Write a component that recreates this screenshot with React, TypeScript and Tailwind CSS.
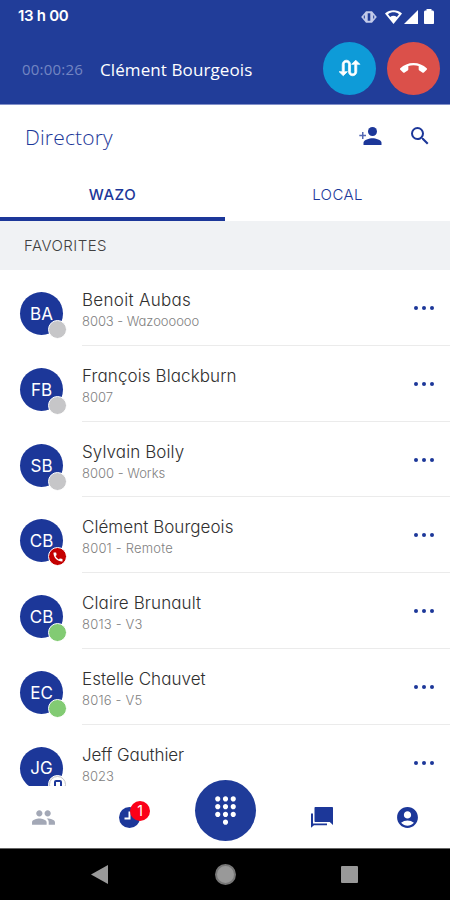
import React from "react";
import {
  MdAccountCircle,
  MdCall,
  MdCallEnd,
  MdDialpad,
  MdPeople,
  MdSearch,
} from "react-icons/md";

type Status = "offline" | "busy" | "available" | "mobile";

interface Contact {
  initials: string;
  name: string;
  detail: string;
  status: Status;
  nameClass: string;
  detailClass: string;
}

const contacts: Contact[] = [
  { initials: "BA", name: "Benoit Aubas", detail: "8003 - Wazoooooo", status: "offline", nameClass: "tracking-[0.3px]", detailClass: "tracking-[-0.05px]" },
  { initials: "FB", name: "François Blackburn", detail: "8007", status: "offline", nameClass: "tracking-[0.1px]", detailClass: "tracking-[0px]" },
  { initials: "SB", name: "Sylvain Boily", detail: "8000 - Works", status: "offline", nameClass: "tracking-[0.1px]", detailClass: "tracking-[0px]" },
  { initials: "CB", name: "Clément Bourgeois", detail: "8001 - Remote", status: "busy", nameClass: "tracking-[0.05px]", detailClass: "tracking-[0.2px]" },
  { initials: "CB", name: "Claire Brunault", detail: "8013 - V3", status: "available", nameClass: "tracking-[0.1px]", detailClass: "tracking-[0.2px]" },
  { initials: "EC", name: "Estelle Chauvet", detail: "8016 - V5", status: "available", nameClass: "tracking-[0.05px]", detailClass: "tracking-[0.2px]" },
  { initials: "JG", name: "Jeff Gauthier", detail: "8023", status: "mobile", nameClass: "tracking-[-0.1px]", detailClass: "tracking-[0px]" },
];

const statusColors: Record<Status, string> = {
  offline: "bg-[#c6c6c8]",
  busy: "bg-[#c40000]",
  available: "bg-[#82cb73]",
  mobile: "bg-white",
};

function StatusBar() {
  return (
    <div className="h-[33px] pl-[18px] pr-[16px] flex items-center justify-between text-white">
      <span className="text-[15px] font-semibold tracking-[-0.3px]">13 h 00</span>
      <div className="flex items-center">
        <svg width="16" height="14" viewBox="0 0 16 14" className="mr-2">
          <path d="M5 1.200h6l4.800 5.800-4.800 5.800H5L.2 7z" fill="#c3cbea" />
          <path d="M6.700 3.200h2.600v7.600H6.700zM2.800 5.500h1v3h-1zM12.200 5.500h1v3h-1z" fill="#213d99" />
        </svg>
        <svg width="17" height="14" viewBox="0 0 17 14" className="mr-[2px]">
          <path d="M8.500 14L0 3.500C4.800-.8 12.200-.8 17 3.500z" fill="#fff" />
          <path d="M3 4.300c3.300-2.600 7.700-2.600 11 0l-2.200 2.600c-2-1.500-4.600-1.500-6.600 0z" fill="#213d99" />
        </svg>
        <svg width="14" height="14" viewBox="0 0 14 14" className="mr-[6px]">
          <path d="M14 0v14H0z" fill="#fff" />
        </svg>
        <svg width="10" height="15" viewBox="0 0 10 15">
          <path d="M2.500 0h5v1.500h.9c1 0 1.600.6 1.600 1.600v11.100c0 .5-.3.800-.8.800H.8c-.5 0-.8-.3-.8-.8V3.100c0-1 .6-1.600 1.600-1.600h.9z" fill="#fff" />
        </svg>
      </div>
    </div>
  );
}

function CallBar() {
  return (
    <div className="h-[72px] pb-px pl-[22px] pr-[10px] flex items-center">
      <span className="w-[78px] pt-[2px] font-['Open_Sans'] text-[15px] tracking-[0.2px] text-[#7385c2]">00:00:26</span>
      <span className="flex-1 pt-[2px] font-['Open_Sans'] text-[17px] tracking-[0.1px] text-white whitespace-nowrap">Clément Bourgeois</span>
      <button className="size-[53px] rounded-full bg-[#0e9bd8] text-white flex items-center justify-center mr-[11px]">
        <svg width="25" height="25" viewBox="0 0 24 24" fill="currentColor" stroke="currentColor" strokeWidth="0.7">
          <path d="M18 4l-4 4h3v7c0 1.100-.9 2-2 2s-2-.9-2-2V8c0-2.210-1.790-4-4-4S5 5.790 5 8v7H2l4 4 4-4H7V8c0-1.100.9-2 2-2s2 .9 2 2v7c0 2.210 1.790 4 4 4s4-1.790 4-4V8h3l-4-4z" />
        </svg>
      </button>
      <button className="size-[53px] rounded-full bg-[#db504a] text-white flex items-center justify-center">
        <MdCallEnd size={27} />
      </button>
    </div>
  );
}

function ContactRow({ contact }: { contact: Contact }) {
  return (
    <div className="h-[75.7px] shrink-0 pl-5 flex">
      <div className="relative mt-[22px] size-[43px] shrink-0 rounded-full bg-[#1c3799] pt-[2px] flex items-center justify-center text-[17px] text-white">
        {contact.initials}
        <span className={`absolute left-[28px] top-[28px] size-[19px] rounded-full border border-white flex items-center justify-center text-white ${statusColors[contact.status]}`}>
          {contact.status === "busy" && <MdCall size={12} />}
          {contact.status === "mobile" && (
            <span className="size-[17px] shrink-0 rounded-full border border-[#c6c6c8] flex items-center justify-center">
              <span className="w-[8px] h-[8px] rounded-[2px] border-2 border-[#1c3799]"></span>
            </span>
          )}
        </span>
      </div>
      <div className="ml-[19px] flex-1 border-b border-[#ebebeb] flex justify-between">
        <div className="pt-[18px]">
          <p className={`text-[17px] leading-6 font-light text-[#303030] whitespace-nowrap ${contact.nameClass}`}>{contact.name}</p>
          <p className={`text-[13px] leading-[18px] font-light text-[#818181] whitespace-nowrap ${contact.detailClass}`}>{contact.detail}</p>
        </div>
        <button className="mt-[36px] mr-[16px] h-1 flex gap-1">
          <span className="size-1 rounded-full bg-[#1c3799]"></span>
          <span className="size-1 rounded-full bg-[#1c3799]"></span>
          <span className="size-1 rounded-full bg-[#1c3799]"></span>
        </button>
      </div>
    </div>
  );
}

function BottomNav() {
  return (
    <nav className="h-[62px] shrink-0 bg-white grid grid-cols-[86px_86px_106px_86px_86px] items-center text-[#1c3799]">
      <div className="flex justify-center text-[#a3a8b6]">
        <MdPeople size={25} />
      </div>
      <div className="relative flex justify-center">
        <svg width="21" height="21" viewBox="0 0 21 21">
          <circle cx="10.500" cy="10.500" r="10.500" fill="currentColor" />
          <path d="M10.500 4.500v7H5.500" fill="none" stroke="#fff" strokeWidth="2" />
        </svg>
        <span className="absolute left-[44px] top-[-6px] size-5 rounded-full bg-[#fb0018] text-white text-[14px] flex items-center justify-center">1</span>
      </div>
      <div className="flex justify-center">
        <button className="-mt-[14px] size-[61px] rounded-full bg-[#1f3b99] text-white flex items-center justify-center">
          <MdDialpad size={31} />
        </button>
      </div>
      <div className="flex justify-center pl-[2px]">
        <svg width="22" height="21" viewBox="0 0 22 21" fill="currentColor">
          <path d="M4.500 0H21c.6 0 1 .4 1 1v17l-3.200-3H4.500c-.6 0-1-.4-1-1V1c0-.6.4-1 1-1zM0 6.500h2v10h14v1.800H3L0 20.800z" />
        </svg>
      </div>
      <div className="flex justify-center pl-px">
        <MdAccountCircle size={25} />
      </div>
    </nav>
  );
}

export default function App() {
  return (
    <div className="w-[450px] h-[900px] overflow-hidden bg-white flex flex-col font-['Inter',sans-serif] [font-feature-settings:'cv11']">
      <header className="h-[105px] shrink-0 bg-[#213d99] border-b border-[#8290c9]">
        <StatusBar />
        <CallBar />
      </header>

      <div className="h-[64px] shrink-0 pl-[25px] pr-[18px] flex items-center text-[#1c3799]">
        <h1 className="flex-1 pt-[2px] font-['Open_Sans'] font-light text-[21px] tracking-[0.15px]">Directory</h1>
        <svg width="23" height="18" viewBox="0 0 23 18" className="mr-[26px] mb-[2px]" fill="currentColor">
          <circle cx="13.500" cy="4.500" r="4.500" />
          <path d="M4.500 18v-2.200c0-3 6-4.600 9-4.600s9 1.600 9 4.600V18z" />
          <path d="M3 5h1.500v2.700H7v1.500H4.500V12H3V9.200H.3V7.700H3z" opacity="0.75" />
        </svg>
        <MdSearch size={24} className="mb-[2px]" />
      </div>

      <div className="h-[52px] shrink-0 grid grid-cols-2 text-[15px] text-[#1c3799]">
        <div className="pt-1 border-b-4 border-[#1c3799] flex items-center justify-center font-medium tracking-[0.5px]">WAZO</div>
        <div className="flex items-center justify-center font-light tracking-[0.4px]">LOCAL</div>
      </div>

      <div className="h-[49px] shrink-0 pl-6 pt-px bg-[#f0f2f4] flex items-center text-[15px] font-light tracking-[0.45px] text-[#404040]">FAVORITES</div>

      <main className="h-[516px] shrink-0 pt-[0.4px] overflow-hidden flex flex-col">
        {contacts.map(contact => (
          <ContactRow key={contact.detail} contact={contact} />
        ))}
      </main>

      <BottomNav />

      <footer className="h-[52px] shrink-0 bg-black border-t border-[#666] grid grid-cols-[163px_124px_163px] items-center text-[#999]">
        <div className="flex justify-end pr-[55px]">
          <svg width="17" height="19" viewBox="0 0 17 19"><path d="M17 0v19L0 9.500z" fill="currentColor" /></svg>
        </div>
        <div className="size-[21px] rounded-full bg-[#999] border-2 border-[#777] justify-self-center"></div>
        <div className="size-[17px] rounded-[1px] bg-[#999] ml-[54px]"></div>
      </footer>
    </div>
  );
}
